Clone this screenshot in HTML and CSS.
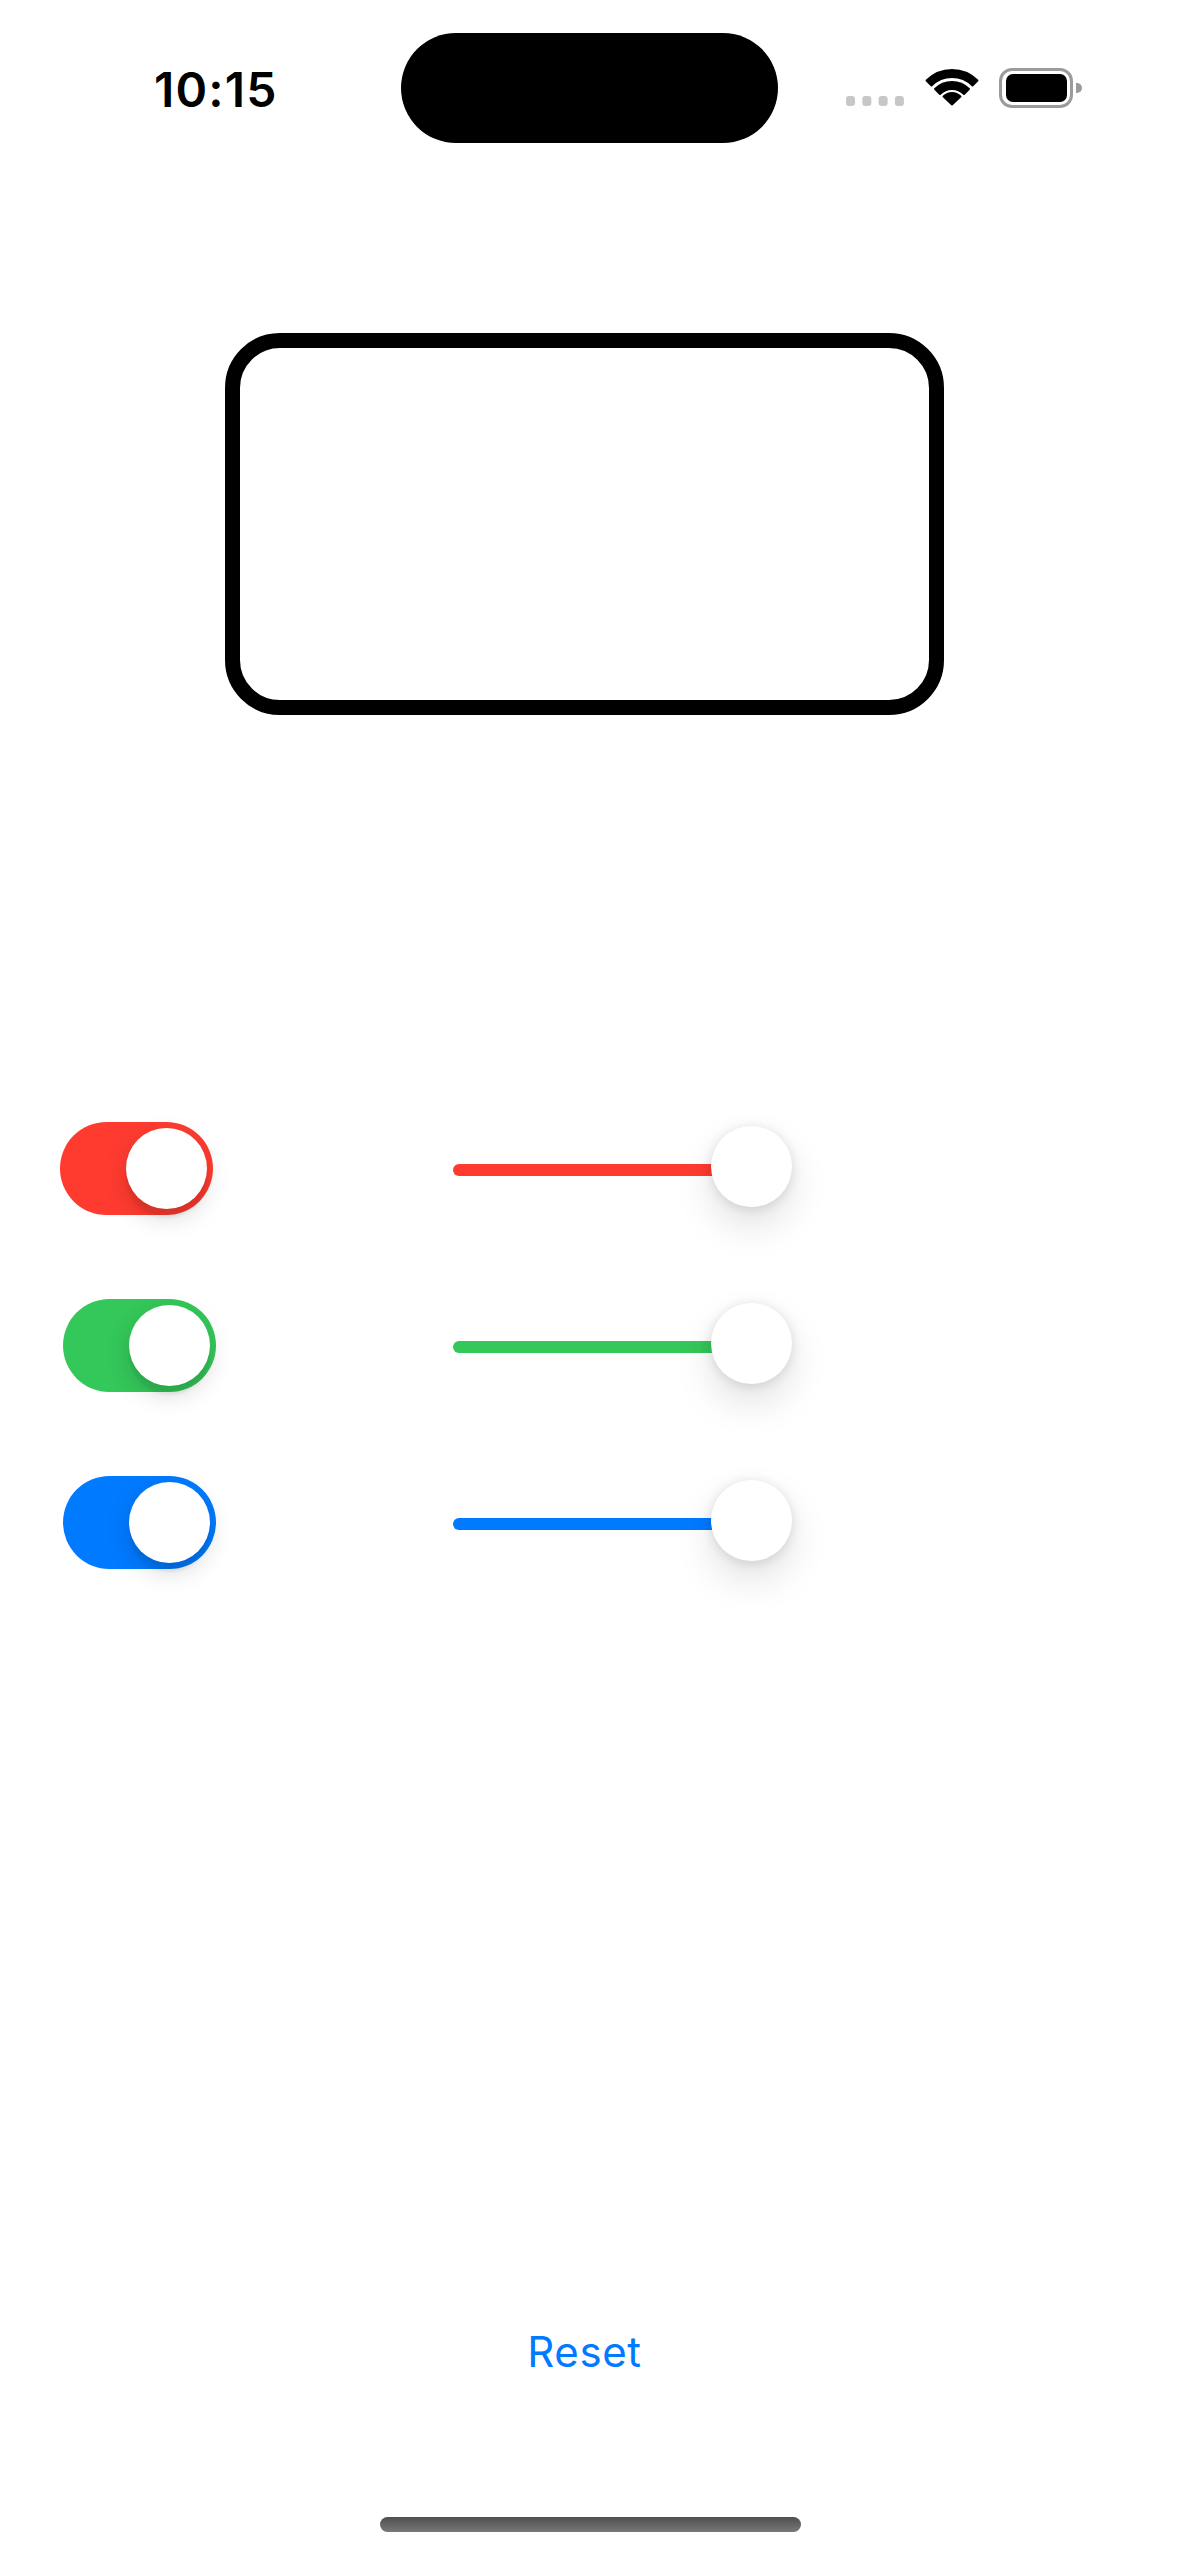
FILE: index.html
```html
<!DOCTYPE html>
<html lang="en">
<head>
<meta charset="utf-8">
<title>Color Mixer</title>
<link rel="stylesheet" href="styles.css">
</head>
<body>
<div class="screen">
  <header class="status-bar">
    <div class="time">10:15</div>
    <div class="island"></div>
    <div class="status-icons">
      <svg width="236" height="40" viewBox="0 0 236 40">
        <rect x="0" y="28" width="9" height="10" rx="3" fill="#c7c7c7"/>
        <rect x="16.3" y="28" width="9" height="10" rx="3" fill="#c7c7c7"/>
        <rect x="32.6" y="28" width="9" height="10" rx="3" fill="#c7c7c7"/>
        <rect x="48.9" y="28" width="9" height="10" rx="3" fill="#c7c7c7"/>
        <g fill="#000" stroke="#000" stroke-width="2" stroke-linejoin="round">
          <path d="M 80.54 12.54 A 36 36 0 0 1 131.46 12.54 L 126.5 17.5 A 29 29 0 0 0 85.5 17.5 Z"/>
          <path d="M 89.03 21.03 A 24 24 0 0 1 122.97 21.03 L 118.02 25.98 A 17 17 0 0 0 93.98 25.98 Z"/>
          <path d="M 106 36.5 L 97.51 28.51 A 12 12 0 0 1 114.49 28.51 Z"/>
        </g>
        <rect x="154.5" y="1.5" width="71" height="37" rx="11.5" fill="none" stroke="#9b9b9b" stroke-width="3"/>
        <rect x="160" y="6" width="61" height="28" rx="7" fill="#000"/>
        <path d="M 230 15 L 231 15 A 4.5 4.5 0 0 1 231 25 L 230 25 Z" fill="#9b9b9b"/>
      </svg>
    </div>
  </header>

  <main class="content">
    <div class="preview"></div>

    <section class="controls">
      <div class="control-row row-red">
        <div class="toggle toggle-red"><div class="toggle-knob"></div></div>
        <div class="slider">
          <div class="slider-track track-red"></div>
          <div class="slider-knob"></div>
        </div>
      </div>
      <div class="control-row row-green">
        <div class="toggle toggle-green"><div class="toggle-knob"></div></div>
        <div class="slider">
          <div class="slider-track track-green"></div>
          <div class="slider-knob"></div>
        </div>
      </div>
      <div class="control-row row-blue">
        <div class="toggle toggle-blue"><div class="toggle-knob"></div></div>
        <div class="slider">
          <div class="slider-track track-blue"></div>
          <div class="slider-knob"></div>
        </div>
      </div>
    </section>

    <div class="reset">Reset</div>
  </main>

  <div class="home-indicator"></div>
</div>
</body>
</html>
```

FILE: styles.css
```css
* {
  box-sizing: border-box;
}

html, body {
  margin: 0;
  padding: 0;
  background: #ffffff;
}

body {
  font-family: Inter, "Noto Sans", "Liberation Sans", sans-serif;
  color: #000;
}

.screen {
  width: 1179px;
  height: 2556px;
  overflow: hidden;
  display: flex;
  flex-direction: column;
  background: #ffffff;
}

/* Status bar */
.status-bar {
  display: flex;
  align-items: center;
  padding-top: 33px;
  height: 143px;
}

.time {
  width: 401px;
  padding-left: 154px;
  padding-top: 3px;
  font-size: 48px;
  line-height: 48px;
  font-weight: 600;
  letter-spacing: 1.2px;
}

.island {
  width: 377px;
  height: 110px;
  border-radius: 55px;
  background: #000;
}

.status-icons {
  padding-left: 68px;
  display: flex;
  align-items: center;
  height: 40px;
}

.status-icons svg {
  display: block;
}

/* Main content */
.content {
  display: flex;
  flex-direction: column;
  padding-right: 10px;
}

.preview {
  align-self: center;
  margin-top: 190px;
  width: 719px;
  height: 382px;
  border: 15px solid #000;
  border-radius: 55px;
  background: #fff;
}

.controls {
  margin-top: 407px;
  display: flex;
  flex-direction: column;
  gap: 84px;
}

.control-row {
  display: flex;
  align-items: center;
  height: 93px;
}

.row-red {
  padding-left: 60px;
  gap: 240px;
}

.row-green,
.row-blue {
  padding-left: 63px;
  gap: 237px;
}

.toggle {
  width: 153px;
  height: 93px;
  border-radius: 46.5px;
  padding: 6px;
  display: flex;
  justify-content: flex-end;
}

.toggle-red { background: #ff3b30; }
.toggle-green { background: #34c759; }
.toggle-blue { background: #007aff; }

.toggle-knob {
  width: 81px;
  height: 81px;
  border-radius: 50%;
  background: #fff;
  box-shadow: 0 9px 24px rgba(0, 0, 0, 0.15), 0 9px 3px rgba(0, 0, 0, 0.06);
}

.slider {
  position: relative;
  width: 339px;
  height: 93px;
  display: flex;
  align-items: center;
}

.slider-track {
  width: 300px;
  height: 12px;
  margin-top: 3px;
  border-radius: 6px;
}

.track-red { background: #ff3b30; }
.track-green { background: #34c759; }
.track-blue { background: #007aff; }

.slider-knob {
  position: absolute;
  right: 0;
  top: 4px;
  width: 81px;
  height: 81px;
  border-radius: 50%;
  background: #fff;
  box-shadow: 0 1.5px 12px rgba(0, 0, 0, 0.12), 0 18px 39px rgba(0, 0, 0, 0.12);
}

.reset {
  margin-top: 762px;
  align-self: center;
  font-size: 42px;
  line-height: 42px;
  font-weight: 400;
  letter-spacing: 0.6px;
  color: #007aff;
}

.home-indicator {
  align-self: center;
  margin-top: 144px;
  margin-left: 2px;
  width: 421px;
  height: 15px;
  border-radius: 7.5px;
  background: linear-gradient(to bottom, #4f4f4f, #787878);
}
```
